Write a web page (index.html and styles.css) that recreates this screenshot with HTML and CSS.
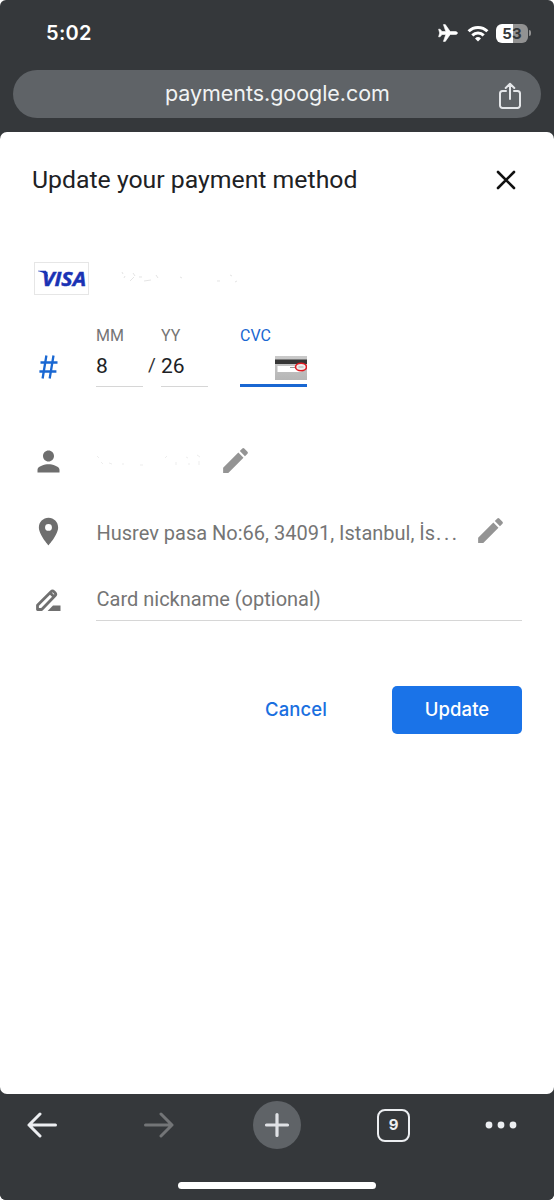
FILE: index.html
```html
<!DOCTYPE html>
<html lang="en">
<head>
<meta charset="utf-8">
<title>Update your payment method</title>
<link rel="stylesheet" href="styles.css">
</head>
<body>
<div class="phone">
  <header class="top">
    <div class="status">
      <span class="time">5:02</span>
      <div class="indicators">
        <svg class="plane" width="20" height="18" viewBox="0 0 20 18"><path fill="#fff" stroke="#fff" stroke-width=".6" stroke-linejoin="round" d="M19.500 9c0-1-1.300-1.500-2.600-1.500h-4.700L7.300.6H5.400l2.400 6.900H4L2.100 5.200H.6L1.700 9 .6 12.800h1.500L4 10.500h3.800l-2.400 6.900h1.900l4.900-6.900h4.700c1.300 0 2.600-.5 2.600-1.500z"/></svg>
        <svg class="wifi" width="22" height="17" viewBox="0 0 22 17"><g fill="none" stroke="#fff" stroke-width="3"><path d="M1.600 6.300a13.400 13.400 0 0 1 18.800 0"/><path d="M5.300 10.300a8.200 8.200 0 0 1 11.400 0"/></g><path fill="#fff" d="M11 16.500l-3-3.100a4.300 4.300 0 0 1 6 0z"/></svg>
        <div class="battery"><span class="level">53</span><i class="nub"></i></div>
      </div>
    </div>
    <div class="address">
      <span class="url">payments.google.com</span>
      <svg class="share" width="24" height="28" viewBox="0 0 24 28" fill="none" stroke="#e4e6e9" stroke-width="2" stroke-linecap="round" stroke-linejoin="round"><path d="M8 9H4.500a2.500 2.500 0 0 0-2.500 2.500v12A2.500 2.500 0 0 0 4.500 26h15a2.500 2.500 0 0 0 2.500-2.500v-12A2.500 2.500 0 0 0 19.500 9H16M12 17V2M7.700 6L12 1.700 16.300 6"/></svg>
    </div>
  </header>
  <main class="sheet">
    <div class="heading">
      <h1 class="title">Update your payment method</h1>
      <svg class="close" width="20" height="20" viewBox="0 0 20 20" stroke="#111" stroke-width="2.600" stroke-linecap="round"><path d="M2 2l16 16M18 2L2 18"/></svg>
    </div>
    <div class="card-row">
      <div class="visa"><svg width="52" height="31" viewBox="0 0 52 31"><text class="visa-word" x="7" y="22.800" textLength="44" lengthAdjust="spacingAndGlyphs">VISA</text><path fill="#1a32b4" d="M3 7.800h8l2.500 7C11 10.500 7 9 3 8.300z"/></svg></div>
      <svg class="smudge" width="124" height="24" viewBox="0 0 124 24" fill="none" stroke="#d9d9d9" stroke-width=".7"><path d="M2 5l1 2M13 6l2 3M4 11l1-2M10 14l4-4M19 10h3M24 14l7-1M36 8l2 3M60 10l2 1M97 14h3M110 8l2 1M115 15l2-1"/></svg>
    </div>
    <div class="expiry-row">
      <svg class="hash" width="19" height="24" viewBox="0 0 19 24" fill="none" stroke="#1967d2" stroke-width="2.300"><path d="M7.400.5L3.600 23.500M14.500.5l-3.800 23M1.500 7.500h17M.4 16.500h17"/></svg>
      <div class="field"><span class="label">MM</span><span class="value">8</span></div>
      <span class="slash">/</span>
      <div class="field"><span class="label">YY</span><span class="value">26</span></div>
      <div class="field cvc"><span class="label">CVC</span>
        <div class="cvc-entry"><svg width="32" height="24" viewBox="0 0 32 24"><defs><linearGradient id="plate" x2="0" y2="1"><stop stop-color="#c9c9c9"/><stop offset="1" stop-color="#b6b6b6"/></linearGradient></defs><path fill="url(#plate)" d="M0 0h32v24H0z"/><path fill="#353535" d="M0 3.500h32V8H0z"/><path fill="#fff" d="M2.500 10h24v6h-24z"/><path stroke="#999" d="M15 11.500h5"/><ellipse cx="26" cy="11" rx="5.500" ry="3.700" fill="#eee" stroke="#e01b22" stroke-width="1.600"/><path stroke="#aaa" d="M23.500 11h5"/></svg></div>
      </div>
    </div>
    <div class="row name-row">
      <svg class="icon" width="33" height="33" viewBox="0 0 24 24"><path fill="#6e6e6e" d="M12 12c2.210 0 4-1.790 4-4s-1.790-4-4-4-4 1.790-4 4 1.790 4 4 4zm0 2c-2.670 0-8 1.340-8 4v2h16v-2c0-2.660-5.330-4-8-4z"/></svg>
      <svg class="name-smudge" width="110" height="22" viewBox="0 0 110 22" fill="none" stroke="#e5e5e5" stroke-width=".7"><path d="M1 6l2 2M5 12l2 2M13 13l3 1M26 14h2M44 15h3M69 8l2-2M80 12v3M90 7l2 1M92 14h2M101 5l3 2M103 11v4"/></svg>
      <svg class="pencil" width="33" height="33" viewBox="0 0 24 24"><path fill="#949494" d="M3 17.250V21h3.750L17.810 9.940l-3.750-3.750L3 17.250zM20.710 7.040a.996.996 0 0 0 0-1.410l-2.340-2.340a.996.996 0 0 0-1.410 0l-1.830 1.830 3.750 3.750 1.830-1.830z"/></svg>
    </div>
    <div class="row address-row">
      <svg class="icon" width="33" height="33" viewBox="0 0 24 24"><path fill="#6e6e6e" d="M12 2C8.130 2 5 5.130 5 9c0 5.250 7 13 7 13s7-7.750 7-13c0-3.870-3.130-7-7-7zm0 9.500a2.500 2.500 0 1 1 0-5 2.500 2.500 0 0 1 0 5z"/></svg>
      <span class="street">Husrev pasa No:66, 34091, Istanbul, İs<span class="more">...</span></span>
      <svg class="pencil" width="33" height="33" viewBox="0 0 24 24"><path fill="#949494" d="M3 17.250V21h3.750L17.810 9.940l-3.750-3.750L3 17.250zM20.710 7.040a.996.996 0 0 0 0-1.410l-2.340-2.340a.996.996 0 0 0-1.410 0l-1.830 1.830 3.750 3.750 1.830-1.830z"/></svg>
    </div>
    <div class="nickname-row">
      <svg class="sign" width="25" height="23" viewBox="0 0 25 23"><path fill="none" stroke="#707070" stroke-width="2.800" stroke-linejoin="round" d="M1.500 20.500v-4.200L15 2.800q1.500-1.500 3 0l1 1q1.500 1.500 0 3L5.700 20.500zM14 3.800l4.200 4.200"/><path fill="#707070" d="M17 16.500h7.500v5.400H11.600z"/></svg>
      <div class="nickname">Card nickname (optional)</div>
    </div>
    <div class="actions">
      <button class="cancel">Cancel</button>
      <button class="update">Update</button>
    </div>
  </main>
  <footer class="toolbar">
    <nav class="tools">
      <svg class="back" width="30" height="26" viewBox="0 0 30 26" fill="none" stroke="#eceef1" stroke-width="3" stroke-linecap="round" stroke-linejoin="round"><path d="M28.500 13H2M13 2L2 13l11 11"/></svg>
      <svg class="forward" width="30" height="26" viewBox="0 0 30 26" fill="none" stroke="#737577" stroke-width="3" stroke-linecap="round" stroke-linejoin="round"><path d="M1.500 13H28M17 2l11 11-11 11"/></svg>
      <span class="add"><svg width="26" height="26" viewBox="0 0 26 26" stroke="#dfe1e5" stroke-width="3.200" stroke-linecap="round"><path d="M13 2.500v21M2.500 13h21"/></svg></span>
      <span class="tabs">9</span>
      <svg width="32" height="8" viewBox="0 0 32 8" fill="#eceef1"><circle cx="4" cy="4" r="3.400"/><circle cx="16" cy="4" r="3.400"/><circle cx="28" cy="4" r="3.400"/></svg>
    </nav>
    <div class="home"></div>
  </footer>
</div>
</body>
</html>
```
FILE: styles.css
```css
* { box-sizing: border-box; }
body { margin: 0; background: #fff; font-family: Roboto, "Liberation Sans", sans-serif; }
svg { display: block; flex: none; }
.phone { width: 554px; height: 1200px; display: flex; flex-direction: column; overflow: hidden; border-radius: 6px; background: #35383b; }

.top { height: 132px; flex: none; }
.status { height: 70px; padding: 0 23px 4px 46px; display: flex; align-items: center; justify-content: space-between; }
.time { color: #fff; font: 600 20px/24px Inter, sans-serif; letter-spacing: .3px; }
.indicators { display: flex; align-items: center; }
.plane { margin-right: 9px; }
.wifi { margin-right: 7px; }
.battery { display: flex; align-items: center; }
.level { width: 32px; height: 19px; border-radius: 6px; background: linear-gradient(90deg, #fff 53%, #929292 53%); color: #35383b; font: 700 15px/19px Inter, sans-serif; text-align: center; }
.nub { width: 2px; height: 6px; margin-left: 1px; border-radius: 0 2px 2px 0; background: #929292; }
.address { height: 48px; margin: 0 13px; padding: 0 19px 0 152px; border-radius: 24px; background: #5f6367; display: flex; align-items: center; justify-content: space-between; }
.url { padding-bottom: 2px; color: #f1f3f4; font: 400 21.500px/28px Inter, sans-serif; letter-spacing: -.05px; }
.share { margin-top: 3px; }

.sheet { height: 962px; flex: none; background: #fff; border-radius: 7px; }
.heading { height: 96px; padding: 0 38px 0 32px; display: flex; align-items: center; justify-content: space-between; }
.title { margin: 0; color: #202124; font-size: 24.800px; line-height: 32px; font-weight: 400; }
.card-row { height: 33px; margin-top: 34px; padding-left: 34px; display: flex; align-items: center; }
.visa { width: 55px; height: 33px; border: 1px solid #e6e6e6; }
.visa-word { font: italic 700 20px "Open Sans", sans-serif; fill: #1a32b4; stroke: #1a32b4; stroke-width: .5; }
.smudge { margin-left: 31px; }

.expiry-row { height: 60px; margin-top: 31px; padding-left: 39px; display: flex; align-items: flex-start; }
.hash { margin: 29px 38px 0 0; }
.field { width: 47px; display: flex; flex-direction: column; }
.label { color: #757575; font-size: 16px; line-height: 20px; }
.value { height: 41px; padding-top: 8px; border-bottom: 1px solid #d6d6d6; color: #202124; font-size: 21px; line-height: 24px; }
.slash { width: 18px; padding: 27px 0 0 5px; color: #333; font-size: 19px; line-height: 24px; }
.cvc { width: 67px; margin-left: 32px; }
.cvc .label { color: #1967d2; }
.cvc-entry { height: 41px; display: flex; justify-content: flex-end; align-items: flex-end; padding-bottom: 4px; border-bottom: 3px solid #1967d2; }

.row { display: flex; align-items: center; padding-left: 32px; }
.name-row { height: 34px; margin-top: 58px; }
.icon { margin-right: 31px; }
.name-smudge { margin-right: 13px; }
.pencil { margin-top: -2px; }
.address-row { height: 34px; margin-top: 36px; }
.street { width: 378px; color: #757575; font-size: 20px; line-height: 28px; white-space: nowrap; padding: 4px 0 0 .5px; }
.more { letter-spacing: 2.600px; padding-left: 1px; }
.nickname-row { height: 40px; margin-top: 33px; padding: 0 32px 0 36px; display: flex; align-items: flex-start; }
.sign { margin: 8px 35px 0 0; }
.nickname { flex: 1; height: 40px; padding: 4px 0 0 .5px; border-bottom: 1px solid #d6d6d6; color: #757575; font-size: 20px; line-height: 28px; }

.actions { display: flex; justify-content: flex-end; align-items: center; gap: 33px; margin-top: 65px; padding-right: 32px; }
.actions button { height: 48px; padding: 0 0 2px; border: 0; font: 500 18.500px/46px Inter, sans-serif; letter-spacing: .1px; }
.cancel { width: 126px; background: none; color: #1a6fdf; }
.actions .update { width: 130px; border-radius: 5px; background: #1a73e8; color: #fff; }

.toolbar { height: 106px; flex: none; display: flex; flex-direction: column; align-items: center; background: #35383b; }
.tools { width: 100%; height: 62px; padding: 0 37px 0 27px; display: flex; align-items: center; }
.back { margin-right: 87px; }
.forward { margin-right: 79px; }
.add { width: 48px; height: 48px; margin-right: 76px; border-radius: 50%; background: #5f6367; display: flex; align-items: center; justify-content: center; }
.tabs { width: 33px; height: 33px; margin-right: 75px; border: 2.500px solid #eceef1; border-radius: 8px; color: #eceef1; font: 700 15px/28px Inter, sans-serif; text-align: center; }
.home { width: 198px; height: 7px; margin-top: 26px; border-radius: 4px; background: #fff; }
```
